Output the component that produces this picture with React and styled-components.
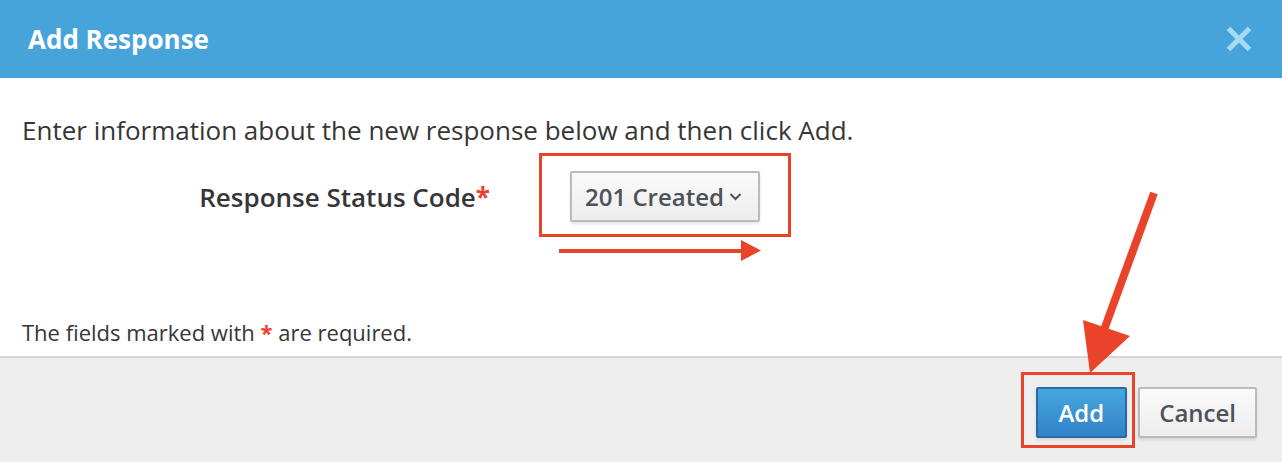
import React from "react";
import styled, { createGlobalStyle } from "styled-components";

const GlobalStyle = createGlobalStyle`
  html, body { margin: 0; padding: 0; background: #fff; }
  body { font-family: "Open Sans", "Noto Sans", sans-serif; color: #363636; }
  * { box-sizing: border-box; }
`;

const RED = "#e9432a";

const Dialog = styled.div`
  position: relative;
  width: 1282px;
  height: 462px;
  display: flex;
  flex-direction: column;
  background: #fff;
  overflow: hidden;
`;

const Header = styled.div`
  height: 78px;
  flex: none;
  background: #47a4db;
  display: flex;
  align-items: center;
  justify-content: space-between;
  padding: 0 29px 0 28px;
`;

const Title = styled.h1`
  margin: 0;
  font-size: 26px;
  font-weight: 700;
  color: #fff;
  line-height: 30px;
`;

const CloseButton = styled.button`
  width: 28px;
  height: 28px;
  padding: 0;
  border: none;
  background: transparent;
  display: flex;
  align-items: center;
  justify-content: center;
  cursor: pointer;
`;

const Body = styled.div`
  flex: 1;
  padding: 37px 22px 0 22px;
  display: flex;
  flex-direction: column;
`;

const Intro = styled.p`
  margin: 0;
  font-size: 26px;
  line-height: 30px;
  color: #363636;
`;

const FormRow = styled.div`
  display: grid;
  grid-template-columns: 468px auto;
  column-gap: 80px;
  align-items: center;
  margin-top: 26px;
`;

const Label = styled.label`
  text-align: right;
  font-size: 26px;
  font-weight: 600;
  color: #363636;
  line-height: 30px;
`;

const Star = styled.span`
  color: #ee3d33;
  font-weight: 700;
`;

const Anchor = styled.div`
  position: relative;
  justify-self: start;
`;

const Highlight = styled.div`
  position: absolute;
  top: ${(p) => p.$t}px;
  left: ${(p) => p.$l}px;
  right: ${(p) => p.$r}px;
  bottom: ${(p) => p.$b}px;
  border: 3px solid ${RED};
  pointer-events: none;
`;

const Button = styled.button`
  height: 51px;
  font-family: "Open Sans", "Noto Sans", sans-serif;
  font-size: 24px;
  font-weight: 600;
  border-radius: 2px;
  border: 2px solid #bbbbbb;
  color: #4d5258;
  background: linear-gradient(to bottom, #fafafa 0%, #ededed 100%);
  box-shadow: 0 2px 3px rgba(3, 3, 3, 0.1);
  padding: 0 ${(p) => p.$pr || 16}px 0 ${(p) => p.$pl || 16}px;
  display: inline-flex;
  align-items: center;
  gap: 5px;
  cursor: pointer;
`;

const PrimaryButton = styled(Button)`
  color: #fff;
  border-color: #2a69a6;
  background: linear-gradient(to bottom, #46a7de 0%, #3282c8 100%);
`;

const Note = styled.p`
  margin: auto 0 0 0;
  padding-bottom: 11px;
  font-size: 22px;
  line-height: 26px;
  color: #363636;
`;

const Footer = styled.div`
  height: 106px;
  flex: none;
  border-top: 2px solid #d6d6d6;
  background: #eeeeee;
  display: flex;
  justify-content: flex-end;
  align-items: flex-start;
  padding: 29px 25px 0 0;
  gap: 11px;
`;

const Overlay = styled.svg`
  position: absolute;
  inset: 0;
  pointer-events: none;
`;

export default function App() {
  return (
    <>
      <GlobalStyle />
      <Dialog>
        <Header>
          <Title>Add Response</Title>
          <CloseButton aria-label="Close">
            <svg width="26" height="26" viewBox="0 0 26 26">
              <path d="M2.5 2.5 L23.5 23.5 M23.5 2.5 L2.5 23.5" stroke="#a6dcf3" strokeWidth="5" strokeLinecap="butt" />
            </svg>
          </CloseButton>
        </Header>
        <Body>
          <Intro>Enter information about the new response below and then click Add.</Intro>
          <FormRow>
            <Label>
              Response Status Code<Star>*</Star>
            </Label>
            <Anchor>
              <Button $pl={13} $pr={16}>
                201 Created
                <svg width="13" height="9" viewBox="0 0 13 9">
                  <path d="M1.5 2 L6.5 7 L11.5 2" fill="none" stroke="#4d5258" strokeWidth="2" />
                </svg>
              </Button>
              <Highlight $t={-18} $l={-31} $r={-31} $b={-15} />
            </Anchor>
          </FormRow>
          <Note>
            The fields marked with <Star>*</Star> are required.
          </Note>
        </Body>
        <Footer>
          <Anchor>
            <PrimaryButton $pl={20} $pr={21}>Add</PrimaryButton>
            <Highlight $t={-15} $l={-15} $r={-8} $b={-10} />
          </Anchor>
          <Button $pl={19} $pr={19}>Cancel</Button>
        </Footer>
        <Overlay width="1282" height="462" viewBox="0 0 1282 462">
          <line x1="559" y1="251" x2="745" y2="251" stroke={RED} strokeWidth="4" />
          <polygon points="741,240 761,250.5 741,261" fill={RED} />
          <line x1="1154" y1="193" x2="1104" y2="330" stroke={RED} strokeWidth="8" strokeLinecap="butt" />
          <polygon points="1083,320 1130,336 1090,373" fill={RED} />
        </Overlay>
      </Dialog>
    </>
  );
}
